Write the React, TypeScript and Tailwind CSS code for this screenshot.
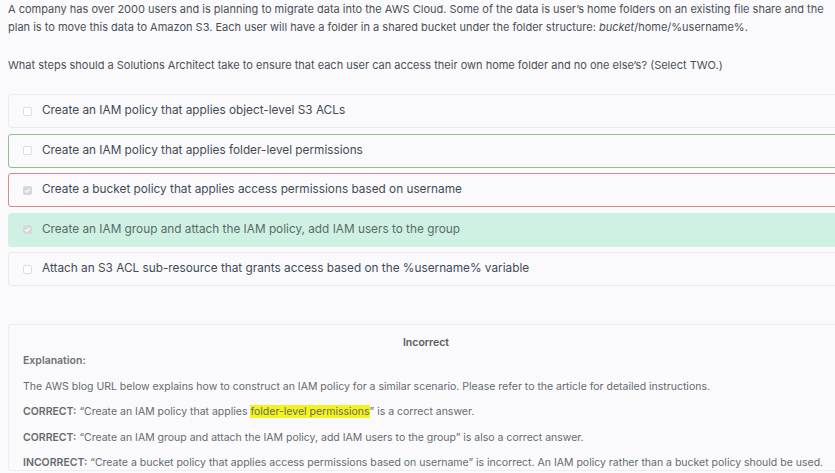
import React from "react";

type Option = {
  label: string;
  checked: boolean;
  tone: "plain" | "correct" | "wrong" | "picked";
};

const options: Option[] = [
  { label: "Create an IAM policy that applies object-level S3 ACLs", checked: false, tone: "plain" },
  { label: "Create an IAM policy that applies folder-level permissions", checked: false, tone: "correct" },
  { label: "Create a bucket policy that applies access permissions based on username", checked: true, tone: "wrong" },
  { label: "Create an IAM group and attach the IAM policy, add IAM users to the group", checked: true, tone: "picked" },
  { label: "Attach an S3 ACL sub-resource that grants access based on the %username% variable", checked: false, tone: "plain" },
];

const toneClass: Record<Option["tone"], string> = {
  plain: "border-[#e9e9ee] bg-[#fafafc] text-[#434a56]",
  correct: "border-[#8fc08f] bg-[#fafafc] text-[#434a56]",
  wrong: "border-[#d88a8f] bg-[#fafafc] text-[#434a56]",
  picked: "border-[#cff1e4] bg-[#cff1e4] text-[#5b6a66]",
};

function Checkbox({ checked }: { checked: boolean }) {
  if (checked) {
    return (
      <span className="flex h-[9px] w-[9px] items-center justify-center rounded-[2px] bg-[#d6d8dc]">
        <svg width="7" height="7" viewBox="0 0 8 8" fill="none">
          <path d="M1.5 4.2 3.2 5.8 6.5 2.2" stroke="#ffffff" strokeWidth="1.3" />
        </svg>
      </span>
    );
  }
  return <span className="h-[9px] w-[9px] rounded-[2px] border border-[#dcdde2] bg-white" />;
}

export default function App() {
  return (
    <div
      className="min-h-[473px] w-[835px] overflow-hidden bg-[#fafafc] pl-2"
      style={{ fontFamily: "Inter, 'Open Sans', sans-serif" }}
    >
      <div className="w-[836px]">
        <p className="text-[11px] leading-[18px] text-[#4a4f58]">
          A company has over 2000 users and is planning to migrate data into the AWS Cloud. Some of the data is user’s home
          folders on an existing file share and the plan is to move this data to Amazon S3. Each user will have a folder in a
          shared bucket under the folder structure: <em>bucket</em>/home/%username%.
        </p>
        <p className="mt-5 text-[11px] leading-[18px] text-[#4a4f58]">
          What steps should a Solutions Architect take to ensure that each user can access their own home folder and no one
          else’s? (Select TWO.)
        </p>

        <div className="mt-5 flex flex-col gap-[5.5px]">
          {options.map((o) => (
            <div
              key={o.label}
              className={`flex h-[34px] items-center gap-[10px] rounded-[3px] border pl-[14px] text-[11.8px] ${toneClass[o.tone]}`}
            >
              <Checkbox checked={o.checked} />
              <span>{o.label}</span>
            </div>
          ))}
        </div>

        <div className="mt-[38px] rounded-[3px] border border-[#eeeef2] bg-[#fafafc] px-[14px] pt-[10px] text-[10.5px] leading-[15px] text-[#666a70]">
          <p className="text-center font-semibold text-[#555a60]">Incorrect</p>
          <p className="mt-[3px] font-semibold text-[#6d7076]">Explanation:</p>
          <p className="mt-[10.5px]">
            The AWS blog URL below explains how to construct an IAM policy for a similar scenario. Please refer to the article
            for detailed instructions.
          </p>
          <p className="mt-[10.5px]">
            <span className="font-semibold">CORRECT:</span> “Create an IAM policy that applies{" "}
            <span className="bg-[#f4f41a]">folder-level permissions</span>” is a correct answer.
          </p>
          <p className="mt-[10.5px]">
            <span className="font-semibold">CORRECT:</span> “Create an IAM group and attach the IAM policy, add IAM users to
            the group” is also a correct answer.
          </p>
          <p className="mt-[10.5px]">
            <span className="font-semibold">INCORRECT:</span> “Create a bucket policy that applies access permissions based on
            username” is incorrect. An IAM policy rather than a bucket policy should be used.
          </p>
        </div>
      </div>
    </div>
  );
}
